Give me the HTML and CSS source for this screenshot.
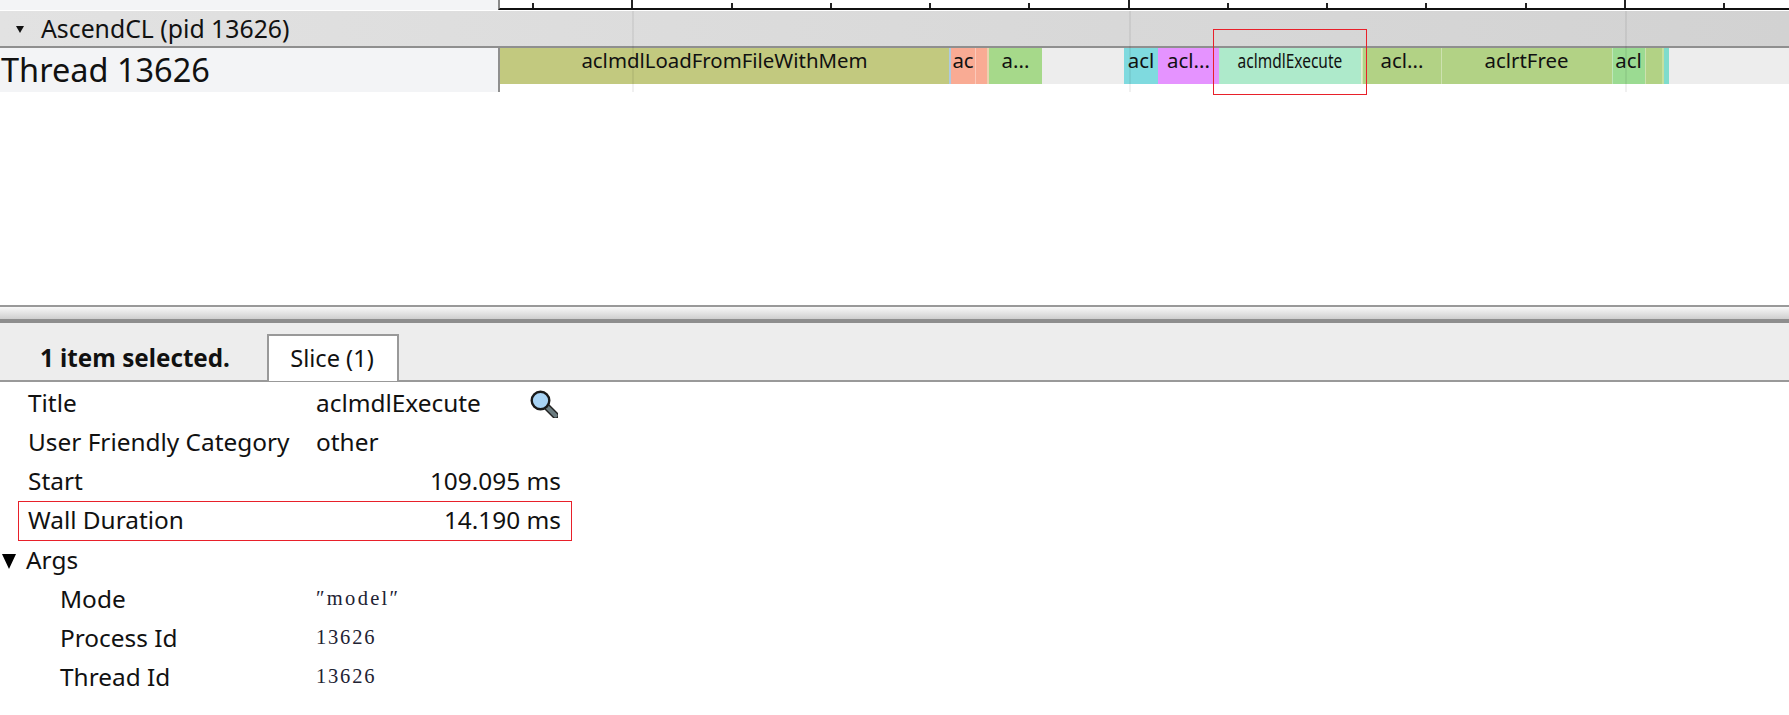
FILE: index.html
```html
<!DOCTYPE html>
<html lang="en">
<head>
<meta charset="utf-8">
<title>AscendCL trace</title>
<link rel="stylesheet" href="styles.css">
</head>
<body>
<div class="timeline">
  <div class="ruler-row">
    <div class="side-top"></div>
    <div class="ruler">
      <i class="tick"></i><i class="tick major"></i><i class="tick"></i><i class="tick"></i><i class="tick"></i><i class="tick"></i><i class="tick major"></i><i class="tick"></i><i class="tick"></i><i class="tick"></i><i class="tick"></i><i class="tick major"></i><i class="tick"></i>
    </div>
  </div>
  <div class="process">
    <svg class="tri-small" viewBox="0 0 8 8"><polygon points="0,1 8,1 4,8"/></svg>
    <span>AscendCL (pid 13626)</span>
  </div>
  <div class="track">
    <div class="thread-name">Thread 13626</div>
    <div class="slices">
      <div class="slice" style="width:449px;background:#c2c97f"><span class="slice-text">aclmdlLoadFromFileWithMem</span></div>
      <div class="slice" style="width:2px;background:#aec9e0"></div>
      <div class="slice" style="width:24px;background:#f9ab94"><span class="slice-text">ac</span></div>
      <div class="slice sep" style="width:12px;background:#f9ab94"></div>
      <div class="slice" style="width:2px;background:#ead2b0"></div>
      <div class="slice" style="width:53px;background:#a6d98a"><span class="slice-text">a...</span></div>
      <div class="slice" style="width:82px;background:#ededed"></div>
      <div class="slice" style="width:34px;background:#7fdadf"><span class="slice-text">acl</span></div>
      <div class="slice" style="width:61px;background:#e593ff"><span class="slice-text">acl...</span></div>
      <div class="slice" style="width:142px;background:#aeeacb"><span class="slice-text narrow">aclmdlExecute</span></div>
      <div class="slice sep" style="width:2px;background:#d5e8b8"></div>
      <div class="slice" style="width:78px;background:#b2d285"><span class="slice-text">acl...</span></div>
      <div class="slice sep" style="width:171px;background:#b2d285"><span class="slice-text">aclrtFree</span></div>
      <div class="slice sep" style="width:33px;background:#9bdb92"><span class="slice-text">acl</span></div>
      <div class="slice sep" style="width:17px;background:#b2d285"></div>
      <div class="slice" style="width:2px;background:#c6e0a0"></div>
      <div class="slice" style="width:5px;background:#7fdccc"></div>
      <div class="slice rest"></div>
    </div>
    <i class="grid-line g1"></i><i class="grid-line g2"></i><i class="grid-line g3"></i>
  </div>
  <div class="highlight-slice"></div>
</div>

<div class="splitter"></div>

<div class="panel-head">
  <div class="selected">1 item selected.</div>
  <div class="tab">Slice (1)</div>
</div>

<div class="details">
  <table class="props">
    <tr><td class="key">Title</td><td class="val title-val"><span>aclmdlExecute</span>
      <svg class="magnifier" viewBox="0 0 28 28">
        <line x1="17" y1="17" x2="25.5" y2="25.5" class="mag-outline"/>
        <line x1="17" y1="17" x2="25.5" y2="25.5" class="mag-handle"/>
        <circle cx="10.5" cy="10.5" r="8.8" class="mag-lens"/>
      </svg></td></tr>
    <tr><td class="key">User Friendly Category</td><td class="val">other</td></tr>
    <tr><td class="key">Start</td><td class="val num">109.095 ms</td></tr>
    <tr><td class="key">Wall Duration</td><td class="val num">14.190 ms</td></tr>
    <tr><td class="key args" colspan="2"><svg class="tri" viewBox="0 0 14 15"><polygon points="0,0 14,0 7,15"/></svg>Args</td></tr>
    <tr><td class="key sub">Mode</td><td class="val code word">″model″</td></tr>
    <tr><td class="key sub">Process Id</td><td class="val code">13626</td></tr>
    <tr><td class="key sub">Thread Id</td><td class="val code">13626</td></tr>
  </table>
  <div class="highlight-row"></div>
</div>
</body>
</html>
```
FILE: styles.css
```css
* { box-sizing: border-box; }
html, body { margin: 0; height: 100%; background: #fff; overflow: hidden; }
body { font-family: "Noto Sans", "Open Sans", sans-serif; color: #111; font-size: 24.4px; }

.timeline { position: relative; height: 305px; }

.ruler-row { display: flex; height: 11px; }
.side-top { width: 498px; height: 10px; background: #f3f4f6; }
.ruler { flex: 1; display: flex; height: 10px; padding-left: 32px; border-left: 2px solid #8a8a8a; border-bottom: 2px solid #111; align-items: flex-end; overflow: hidden; }
.tick { flex: 0 0 99.25px; height: 5px; border-left: 2px solid #222; }
.tick.major { height: 8px; }

.process { display: flex; align-items: center; height: 37px; background: linear-gradient(90deg, #e2e2e2, #d2d2d2); border-bottom: 2px solid #8f8f8f; padding-left: 16px; font-size: 24.8px; line-height: 1; }
.tri-small { width: 8px; height: 8px; margin-right: 17px; fill: #111; }

.track { position: relative; display: flex; height: 44px; }
.thread-name { width: 500px; flex: none; background: #f3f4f6; border-right: 2px solid #8f8f8f; font-size: 32.5px; line-height: 44px; padding-left: 1px; white-space: nowrap; }
.slices { flex: 1; display: flex; height: 36px; }
.slice { flex: none; height: 36px; display: flex; justify-content: center; }
.slice.sep { box-shadow: inset 1px 0 rgba(255,255,255,.35); }
.slice.rest { flex: 1; background: #ededed; }
.slice-text { font-size: 20.4px; line-height: 24px; white-space: nowrap; }
.slice-text.narrow { transform: scaleX(0.76); }
.grid-line { position: absolute; top: -37px; bottom: 0; width: 2px; background: rgba(0,0,0,.06); }
.g1 { left: 632px; }
.g2 { left: 1129px; }
.g3 { left: 1625px; }

.highlight-slice { position: absolute; left: 1213px; top: 29px; width: 154px; height: 66px; border: 1px solid #e8202a; }

.splitter { height: 18px; border-top: 2px solid #999; border-bottom: 4px solid #8e8e8e; background: linear-gradient(#f8f8f8, #cfcfcf); }

.panel-head { display: flex; align-items: flex-end; height: 59px; background: #ededed; border-bottom: 2px solid #999; padding-left: 40px; }
.selected { width: 227px; font-weight: 700; font-size: 24.2px; line-height: 44px; white-space: nowrap; }
.tab { width: 132px; height: 47px; margin-bottom: -1px; background: #fff; border: 2px solid #999; border-bottom: 0; text-align: center; font-size: 23.6px; line-height: 44px; padding-right: 2px; }

.details { position: relative; }
.props { border-collapse: collapse; }
.props td { height: 39px; padding: 4px 0 0; white-space: nowrap; line-height: 1; }
.props .key { padding-left: 28px; width: 316px; }
.props .key.sub { padding-left: 60px; padding-top: 6px; }
.props .key.args { padding-left: 2px; padding-top: 5px; }
.tri { width: 14px; height: 15px; margin-right: 10px; fill: #000; }
.val { width: 245px; }
.val.num { text-align: right; }
.title-val { position: relative; }
.magnifier { position: absolute; left: 214px; top: 8px; width: 28px; height: 28px; }
.mag-outline { stroke: #222; stroke-width: 7; stroke-linecap: round; }
.mag-handle { stroke: #6b7c80; stroke-width: 4; stroke-linecap: round; }
.mag-lens { fill: #a9d4f5; stroke: #1a1a1a; stroke-width: 2.4; }
.code { font-family: "Liberation Serif", serif; font-size: 20.5px; color: #223; letter-spacing: 1.8px; }
.code.word { letter-spacing: 2.3px; }

.highlight-row { position: absolute; left: 18px; top: 119px; width: 554px; height: 40px; border: 1px solid #e8202a; pointer-events: none; }
```
